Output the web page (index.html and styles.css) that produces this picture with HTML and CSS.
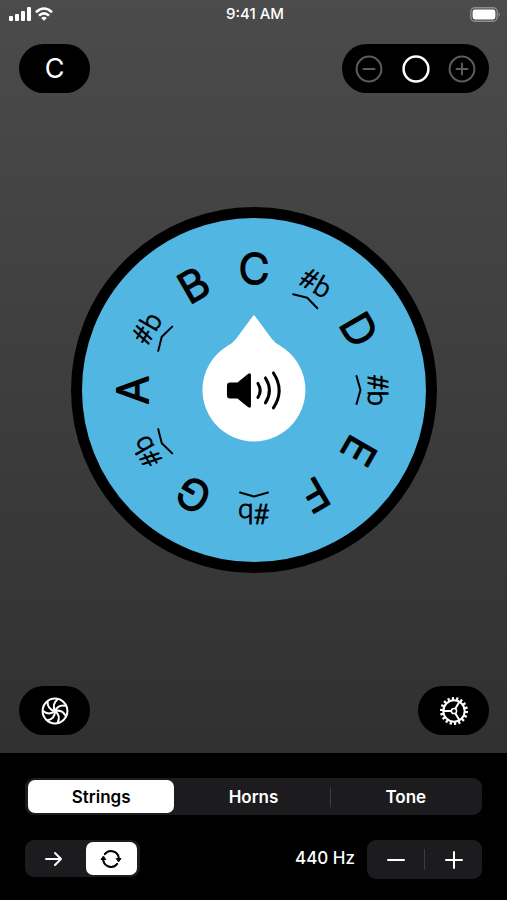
FILE: index.html
```
<!DOCTYPE html>
<html lang="en">
<head>
	<meta charset="utf-8">
	<meta name="viewport" content="width=device-width, initial-scale=1">
	<title>Pitch Pipe</title>
	<link rel="stylesheet" href="styles.css">
</head>
<body>

<div class="app">
	<!-- status bar -->
	<div class="status">
		<div class="signal">
			<svg width="22" height="14" viewBox="0 0 22 14" fill="#fff">
				<rect x="0" y="9" width="4" height="5" rx="1"/>
				<rect x="6" y="7" width="4" height="7" rx="1"/>
				<rect x="12" y="4" width="4" height="10" rx="1"/>
				<rect x="18" y="0" width="4" height="14" rx="1"/>
			</svg>
			<svg width="18" height="14" viewBox="0 0 18 14" fill="none" stroke="#fff" stroke-width="2.6">
				<path d="M1 5.2Q9-2.2 17 5.2M4 8.6Q9 4 14 8.6"/>
				<path d="M9 13.8L6.2 11Q9 8.6 11.8 11Z" fill="#fff" stroke="none"/>
			</svg>
		</div>
		<span class="time">9:41 AM</span>
		<svg class="battery" width="31" height="15" viewBox="0 0 31 15">
			<rect x=".8" y=".8" width="26.4" height="13.4" rx="4" fill="none" stroke="#8e8e8e" stroke-width="1.4"/>
			<rect x="2.6" y="2.6" width="22.8" height="9.8" rx="2.4" fill="#fff"/>
			<path d="M28.6 5Q31 7.5 28.6 10Z" fill="#8e8e8e"/>
		</svg>
	</div>

	<div class="bar">
		<button class="pill" type="button">C</button>
		<div class="pill octave">
			<button type="button" aria-label="Octave down">
				<svg width="28" height="28" viewBox="-14 -14 28 28"><circle r="12.4"/><path d="M-5.5 0H5.5"/></svg>
			</button>
			<button class="on" type="button" aria-label="Reset octave">
				<svg width="28" height="28" viewBox="-14 -14 28 28"><circle r="12.4"/></svg>
			</button>
			<button type="button" aria-label="Octave up">
				<svg width="28" height="28" viewBox="-14 -14 28 28"><circle r="12.4"/><path d="M-5.5 0H5.5M0-5.5V5.5"/></svg>
			</button>
		</div>
	</div>

	<!-- note wheel, one step every 30 degrees -->
	<div class="wheel">
		<svg class="dial" viewBox="-183 -183 366 366">
			<circle class="rim" r="177.5"/>
			<g class="note">
				<text y="-106">C</text>
				<text y="-106" transform="rotate(60)">D</text>
				<text y="-106" transform="rotate(120)">E</text>
				<text y="-106" transform="rotate(150)">F</text>
				<text y="-106" transform="rotate(210)">G</text>
				<text y="-106" transform="rotate(270)">A</text>
				<text y="-106" transform="rotate(330)">B</text>
			</g>
			<g class="half">
				<g transform="rotate(30)"><text y="-114">#b</text><path d="M-14-102.5L0-106.5L14-102.5"/></g>
				<g transform="rotate(90)"><text y="-114">#b</text><path d="M-14-102.5L0-106.5L14-102.5"/></g>
				<g transform="rotate(180)"><text y="-114">#b</text><path d="M-14-102.5L0-106.5L14-102.5"/></g>
				<g transform="rotate(240)"><text y="-114">#b</text><path d="M-14-102.5L0-106.5L14-102.5"/></g>
				<g transform="rotate(300)"><text y="-114">#b</text><path d="M-14-102.5L0-106.5L14-102.5"/></g>
			</g>
		</svg>
		<button class="play" type="button" aria-label="Play note">
			<svg viewBox="-76 -76 152 152">
				<path class="drop" d="M-1-74Q0-75.5 1-74L18-51Q22-46 27-43.8A51.5 51.5 0 1 1-27-43.8Q-22-46-18-51Z"/>
				<path class="horn" d="M-24-7.5H-16.5L-6-16Q-3-18-3-15V16Q-3 19-6 17L-16.5 8.5H-24Q-27 8.5-27 5.5V-4.5Q-27-7.5-24-7.5Z"/>
				<path class="wave" d="M4-6.5Q8.5 .5 4 7.5M11.5-12Q19.5 .5 11.5 13M19.5-17Q31 .5 19.5 18"/>
			</svg>
		</button>
	</div>

	<div class="bar bottom">
		<button class="pill" type="button" aria-label="Temperament">
			<svg class="aperture" width="28" height="28" viewBox="-14 -14 28 28">
				<circle r="12.4"/>
				<path id="blade" d="M0 0Q-3.5-7 3-12"/>
				<use href="#blade" transform="rotate(51.4)"/>
				<use href="#blade" transform="rotate(102.9)"/>
				<use href="#blade" transform="rotate(154.3)"/>
				<use href="#blade" transform="rotate(205.7)"/>
				<use href="#blade" transform="rotate(257.1)"/>
				<use href="#blade" transform="rotate(308.6)"/>
			</svg>
		</button>
		<button class="pill" type="button" aria-label="Settings">
			<svg class="gear" width="30" height="30" viewBox="-15 -15 30 30">
				<circle class="teeth" r="12.5" pathLength="36"/>
				<circle r="10.7"/>
				<circle class="hub" r="2.6"/>
				<path d="M-2.6 0H-10.7M1.3-2.2L5.4-9.2M1.3 2.2L5.4 9.2"/>
			</svg>
		</button>
	</div>

	<!-- sound settings -->
	<div class="panel">
		<div class="seg" role="radiogroup" aria-label="Sound">
			<label><input type="radio" name="sound" checked><span>Strings</span></label>
			<label><input type="radio" name="sound"><span>Horns</span></label>
			<label><input type="radio" name="sound"><span>Tone</span></label>
		</div>
		<div class="row">
			<div class="seg mode" role="radiogroup" aria-label="Play mode">
				<label><input type="radio" name="mode" aria-label="Once"><span>
					<svg width="22" height="22" viewBox="-11 -11 22 22"><path d="M-8 0H7M1-6L7 0L1 6"/></svg>
				</span></label>
				<label><input type="radio" name="mode" aria-label="Loop" checked><span>
					<svg width="22" height="22" viewBox="-11 -11 22 22">
						<path d="M-6.2-4.8A7.8 7.8 0 0 1 7.8 0M6.2 4.8A7.8 7.8 0 0 1-7.8 0"/>
						<path class="tip" d="M5.6-.5H10L7.8 2.6ZM-5.6 .5H-10L-7.8-2.6Z"/>
					</svg>
				</span></label>
			</div>
			<output class="pitch">440 Hz</output>
			<div class="stepper">
				<button type="button" aria-label="Lower pitch"><svg width="20" height="20" viewBox="-10 -10 20 20"><path d="M-8 0H8"/></svg></button>
				<button type="button" aria-label="Raise pitch"><svg width="20" height="20" viewBox="-10 -10 20 20"><path d="M-8 0H8M0-8V8"/></svg></button>
			</div>
		</div>
	</div>
</div>

</body>
</html>
```
FILE: styles.css
```
*{ margin:0; padding:0; box-sizing:border-box;}
body{ font-family:Inter, "Liberation Sans", sans-serif; color:#fff; background:#000;}
button{ border:0; background:none; color:inherit; font:inherit; cursor:pointer;}
svg{ display:block;}

.app{ display:flex; flex-direction:column; min-height:100vh; background:linear-gradient(#4b4b4b,#2b2b2b);}

/* status */
.status{ display:grid; grid-template-columns:1fr auto 1fr; align-items:center; height:28px; padding:0 6px 0 9px;}
.signal{ display:flex; gap:4px;}
.time{ font-size:15px; line-height:20px; font-weight:500;}
.battery{ justify-self:end;}

/* pills */
.bar{ display:flex; justify-content:space-between; padding:16px 18px 0 19px;}
.bottom{ padding:0 18px 18px 19px;}
.pill{ display:flex; align-items:center; justify-content:center; width:71px; height:49px; border-radius:25px; background:#000; font-size:27px;}
.octave{ justify-content:space-between; width:147px; padding:0 13px;}
.octave svg{ fill:none; stroke:#5c5c5c; stroke-width:2; stroke-linecap:round;}
.octave .on svg{ stroke:#fff; stroke-width:2.5;}
.aperture,.gear{ fill:none; stroke:#fff; stroke-width:2;}
.gear .teeth{ stroke-width:3; stroke-dasharray:1 1;}
.gear .hub{ stroke-width:1.5;}

/* wheel */
.wheel{ display:grid; flex:1; place-content:center; place-items:center; grid-template-columns:minmax(0,366px); padding:0 18px;}
.dial,.play{ grid-area:1 / 1;}
.dial{ width:100%; text-anchor:middle; stroke:#000; stroke-linejoin:round; stroke-linecap:round;}
.rim{ fill:#51b6e1; stroke-width:11;}
.note{ font-size:42px; font-weight:300; stroke-width:2;}
.half{ font-family:Lato, "Liberation Sans", sans-serif; font-size:28px; font-weight:300; stroke-width:1;}
.half path{ fill:none; stroke-width:2;}
.play{ width:41.5%; border-radius:50%;}
.drop{ fill:#fff;}
.wave{ fill:none; stroke:#000; stroke-width:3; stroke-linecap:round;}

/* panel */
.panel{ padding:25px 25px 21px; background:#000;}
.seg{ display:flex; height:37px; padding:2px 0; border-radius:9px; background:#1c1c1e;}
.seg label{ position:relative; flex:1; padding:0 3px; cursor:pointer;}
.seg input{ position:absolute; opacity:0;}
.seg span{ display:flex; align-items:center; justify-content:center; height:33px; border-radius:7px; font-size:17px; line-height:20px; font-weight:600;}
.seg input:checked + span{ background:#fff; color:#000;}
.seg label:nth-child(3):before{ content:""; position:absolute; left:0; top:7px; width:1px; height:20px; background:#3d3d40;}
.seg svg,.stepper svg{ fill:none; stroke:currentColor; stroke-width:2; stroke-linecap:round; stroke-linejoin:round;}
.seg .tip{ fill:currentColor; stroke-width:1;}
.row{ display:flex; align-items:flex-start; margin-top:25px;}
.mode{ width:115px;}
.pitch{ margin-left:auto; margin-right:12px; font-size:17px; line-height:37px; font-weight:500;}
.stepper{ display:flex; width:115px; height:39px; border-radius:9px; background:#1c1c1e;}
.stepper button{ display:flex; flex:1; align-items:center; justify-content:center;}
.stepper button + button{ border-left:1px solid #3d3d40; margin:9px 0; height:21px;}
```
